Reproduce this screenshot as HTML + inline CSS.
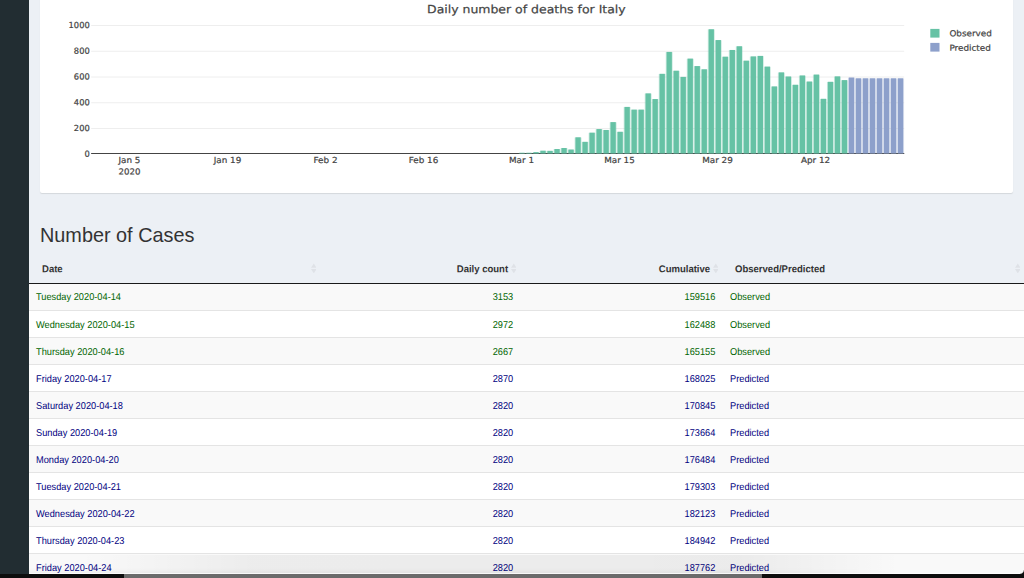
<!DOCTYPE html>
<html lang="en"><head><meta charset="utf-8"><title>Daily number of deaths for Italy</title>
<style>
html,body{margin:0;padding:0}
body{width:1024px;height:578px;overflow:hidden;background:#ecf0f5;position:relative;font-family:"Liberation Sans",sans-serif;color:#333}
.side{position:absolute;left:0;top:0;width:29px;height:578px;background:#222d32}
.card{position:absolute;left:40px;top:-10px;width:973px;height:202.5px;background:#fff;border-radius:2px;box-shadow:0 1px 1px rgba(0,0,0,.1)}
svg.chart{position:absolute;left:0;top:0}
svg.chart text{font-family:"DejaVu Sans","Liberation Sans",sans-serif;font-size:8.3px;fill:#444;stroke:#444;stroke-width:.22px}
svg.chart .title{font-size:11.4px}
h2{position:absolute;left:40.3px;top:222px;margin:0;font-weight:400;font-size:19.8px;line-height:26px;color:#333;white-space:nowrap;transform:scale(1.003,1) rotate(.02deg);transform-origin:0 50%}
table{position:absolute;left:29px;top:256px;width:995px;border-collapse:separate;border-spacing:0;font-size:10px;table-layout:fixed}
th{height:27px;padding:0 0 1px 0;box-sizing:border-box;font-weight:700;color:#333;font-size:9.3px;position:relative;white-space:nowrap}
td{height:27px;padding:0;box-sizing:border-box;border-top:1px solid #e4e4e4;white-space:nowrap;line-height:14px}
tr:first-child td{border-top:none}
tr.odd td{background:#f9f9f9}
tr.even td{background:#fff}
tr.o td{color:#006400}
tr.p td{color:#000080}
.c1{text-align:left;padding-left:7.3px;width:291px}
.c2{text-align:right;padding-right:7px;width:200px}
.c3{text-align:right;padding-right:6.5px;width:202px}
.c4{text-align:left;padding-left:7.6px}
th.c1{padding-left:12.9px}
th.c2{padding-right:12.4px}
th.c3{padding-right:12.3px}
th.c4{padding-left:12.8px}
.t{display:inline-block;transform:scale(.925,1) rotate(.03deg);transform-origin:0 50%}
.c2 .t,.c3 .t{transform-origin:100% 50%}
th .t{transform:scale(1.025,1.08) rotate(.03deg)}
td .t{position:relative;top:.6px}
.si{position:absolute;right:3.7px;top:6.6px;fill:#dfe2e7}
.hb{position:absolute;left:29px;top:283px;width:995px;height:1px;background:#1a1a1a}
.corner{position:absolute;left:1020px;top:570px;width:4px;height:4px;background:radial-gradient(circle at 0 0,rgba(13,13,13,0) 3.3px,#0d0d0d 4.4px)}
.hl{position:absolute;left:29px;top:573px;width:991px;height:1px;background:rgba(255,255,255,.75)}
.strip{position:absolute;left:0;top:574px;height:4px;width:1024px;background:#0d0d0d}
.strip i{position:absolute;left:124px;top:0;width:638px;height:4px;background:#6b6b6b}
.shade{position:absolute;left:0;top:555px;width:1024px;height:19px;background:linear-gradient(90deg,rgba(0,0,0,0) 80px,rgba(0,0,0,.05) 250px,rgba(0,0,0,.055) 740px,rgba(0,0,0,0) 900px)}
.shade2{position:absolute;left:29px;top:568px;width:995px;height:6px;background:linear-gradient(rgba(0,0,0,0),rgba(0,0,0,.04));-webkit-mask-image:linear-gradient(90deg,#000 700px,transparent 870px);mask-image:linear-gradient(90deg,#000 700px,transparent 870px)}
</style></head><body>
<div class="side"></div>
<div class="card"></div>
<svg class="chart" width="1024" height="200" viewBox="0 0 1024 200">
<text class="title" transform="translate(526.35,13.3) scale(1.094,1) rotate(.03)" text-anchor="middle">Daily number of deaths for Italy</text>
<g stroke="#eee" stroke-width="1"><line x1="91.2" x2="904.2" y1="128.54" y2="128.54"/><line x1="91.2" x2="904.2" y1="102.78" y2="102.78"/><line x1="91.2" x2="904.2" y1="77.02" y2="77.02"/><line x1="91.2" x2="904.2" y1="51.26" y2="51.26"/><line x1="91.2" x2="904.2" y1="25.50" y2="25.50"/></g>
<line x1="91.2" x2="904.2" y1="153.5" y2="153.5" stroke="#444" stroke-width="1"/>
<g fill="#66c2a5" opacity=".3"><rect x="518.50" y="152.95" width="7.01" height="1.05"/><rect x="525.50" y="152.95" width="7.01" height="1.05"/><rect x="532.51" y="152.31" width="7.01" height="1.69"/><rect x="539.52" y="150.89" width="7.01" height="3.11"/><rect x="546.53" y="151.02" width="7.01" height="2.98"/><rect x="553.54" y="149.22" width="7.01" height="4.78"/><rect x="560.55" y="148.19" width="7.01" height="5.81"/><rect x="567.57" y="149.73" width="7.01" height="4.27"/><rect x="574.58" y="137.50" width="7.01" height="16.50"/><rect x="581.59" y="142.01" width="7.01" height="11.99"/><rect x="588.60" y="132.86" width="7.01" height="21.14"/><rect x="595.61" y="129.26" width="7.01" height="24.74"/><rect x="602.62" y="130.16" width="7.01" height="23.84"/><rect x="609.62" y="122.30" width="7.01" height="31.70"/><rect x="616.63" y="131.96" width="7.01" height="22.04"/><rect x="623.64" y="107.10" width="7.01" height="46.90"/><rect x="630.65" y="109.81" width="7.01" height="44.19"/><rect x="637.66" y="109.81" width="7.01" height="44.19"/><rect x="644.67" y="93.58" width="7.01" height="60.42"/><rect x="651.69" y="99.24" width="7.01" height="54.76"/><rect x="658.70" y="74.00" width="7.01" height="80.00"/><rect x="665.71" y="52.10" width="7.01" height="101.90"/><rect x="672.72" y="70.91" width="7.01" height="83.09"/><rect x="679.73" y="77.09" width="7.01" height="76.91"/><rect x="686.74" y="58.80" width="7.01" height="95.20"/><rect x="693.75" y="66.27" width="7.01" height="87.73"/><rect x="700.75" y="69.49" width="7.01" height="84.51"/><rect x="707.76" y="29.44" width="7.01" height="124.56"/><rect x="714.77" y="40.25" width="7.01" height="113.75"/><rect x="721.78" y="56.87" width="7.01" height="97.13"/><rect x="728.79" y="50.17" width="7.01" height="103.83"/><rect x="735.80" y="46.44" width="7.01" height="107.56"/><rect x="742.81" y="60.86" width="7.01" height="93.14"/><rect x="749.82" y="56.61" width="7.01" height="97.39"/><rect x="756.84" y="56.10" width="7.01" height="97.90"/><rect x="763.85" y="66.79" width="7.01" height="87.21"/><rect x="770.86" y="86.62" width="7.01" height="67.38"/><rect x="777.87" y="72.58" width="7.01" height="81.42"/><rect x="784.88" y="76.70" width="7.01" height="77.30"/><rect x="791.88" y="84.95" width="7.01" height="69.05"/><rect x="798.89" y="75.67" width="7.01" height="78.33"/><rect x="805.90" y="81.73" width="7.01" height="72.27"/><rect x="812.92" y="74.77" width="7.01" height="79.23"/><rect x="819.93" y="98.99" width="7.01" height="55.01"/><rect x="826.94" y="81.99" width="7.01" height="72.01"/><rect x="833.95" y="76.58" width="7.01" height="77.42"/><rect x="840.96" y="80.31" width="7.01" height="73.69"/></g><g fill="#8da0cb" opacity=".3"><rect x="847.97" y="77.74" width="7.01" height="76.26"/><rect x="854.98" y="78.51" width="7.01" height="75.49"/><rect x="861.99" y="78.51" width="7.01" height="75.49"/><rect x="869.00" y="78.51" width="7.01" height="75.49"/><rect x="876.00" y="78.51" width="7.01" height="75.49"/><rect x="883.01" y="78.51" width="7.01" height="75.49"/><rect x="890.02" y="78.51" width="7.01" height="75.49"/><rect x="897.03" y="78.51" width="7.01" height="75.49"/></g>
<g fill="#66c2a5"><rect x="519.35" y="152.75" width="5.30" height="1.25"/><rect x="526.36" y="152.75" width="5.30" height="1.25"/><rect x="533.37" y="152.11" width="5.30" height="1.89"/><rect x="540.38" y="150.69" width="5.30" height="3.31"/><rect x="547.39" y="150.82" width="5.30" height="3.18"/><rect x="554.40" y="149.02" width="5.30" height="4.98"/><rect x="561.41" y="147.99" width="5.30" height="6.01"/><rect x="568.42" y="149.53" width="5.30" height="4.47"/><rect x="575.43" y="137.30" width="5.30" height="16.70"/><rect x="582.44" y="141.81" width="5.30" height="12.19"/><rect x="589.45" y="132.66" width="5.30" height="21.34"/><rect x="596.46" y="129.06" width="5.30" height="24.94"/><rect x="603.47" y="129.96" width="5.30" height="24.04"/><rect x="610.48" y="122.10" width="5.30" height="31.90"/><rect x="617.49" y="131.76" width="5.30" height="22.24"/><rect x="624.50" y="106.90" width="5.30" height="47.10"/><rect x="631.51" y="109.61" width="5.30" height="44.39"/><rect x="638.52" y="109.61" width="5.30" height="44.39"/><rect x="645.53" y="93.38" width="5.30" height="60.62"/><rect x="652.54" y="99.04" width="5.30" height="54.96"/><rect x="659.55" y="73.80" width="5.30" height="80.20"/><rect x="666.56" y="51.90" width="5.30" height="102.10"/><rect x="673.57" y="70.71" width="5.30" height="83.29"/><rect x="680.58" y="76.89" width="5.30" height="77.11"/><rect x="687.59" y="58.60" width="5.30" height="95.40"/><rect x="694.60" y="66.07" width="5.30" height="87.93"/><rect x="701.61" y="69.29" width="5.30" height="84.71"/><rect x="708.62" y="29.24" width="5.30" height="124.76"/><rect x="715.63" y="40.05" width="5.30" height="113.95"/><rect x="722.64" y="56.67" width="5.30" height="97.33"/><rect x="729.65" y="49.97" width="5.30" height="104.03"/><rect x="736.66" y="46.24" width="5.30" height="107.76"/><rect x="743.67" y="60.66" width="5.30" height="93.34"/><rect x="750.68" y="56.41" width="5.30" height="97.59"/><rect x="757.69" y="55.90" width="5.30" height="98.10"/><rect x="764.70" y="66.59" width="5.30" height="87.41"/><rect x="771.71" y="86.42" width="5.30" height="67.58"/><rect x="778.72" y="72.38" width="5.30" height="81.62"/><rect x="785.73" y="76.50" width="5.30" height="77.50"/><rect x="792.74" y="84.75" width="5.30" height="69.25"/><rect x="799.75" y="75.47" width="5.30" height="78.53"/><rect x="806.76" y="81.53" width="5.30" height="72.47"/><rect x="813.77" y="74.57" width="5.30" height="79.43"/><rect x="820.78" y="98.79" width="5.30" height="55.21"/><rect x="827.79" y="81.79" width="5.30" height="72.21"/><rect x="834.80" y="76.38" width="5.30" height="77.62"/><rect x="841.81" y="80.11" width="5.30" height="73.89"/></g>
<g fill="#8da0cb"><rect x="848.82" y="77.54" width="5.30" height="76.46"/><rect x="855.83" y="78.31" width="5.30" height="75.69"/><rect x="862.84" y="78.31" width="5.30" height="75.69"/><rect x="869.85" y="78.31" width="5.30" height="75.69"/><rect x="876.86" y="78.31" width="5.30" height="75.69"/><rect x="883.87" y="78.31" width="5.30" height="75.69"/><rect x="890.88" y="78.31" width="5.30" height="75.69"/><rect x="897.89" y="78.31" width="5.30" height="75.69"/></g>
<line x1="91.2" x2="904.2" y1="153.5" y2="153.5" stroke="#444" stroke-width="1" opacity=".45"/>
<g><text transform="translate(89.7,156.70) rotate(.03)" text-anchor="end">0</text><text transform="translate(89.7,130.94) rotate(.03)" text-anchor="end">200</text><text transform="translate(89.7,105.18) rotate(.03)" text-anchor="end">400</text><text transform="translate(89.7,79.42) rotate(.03)" text-anchor="end">600</text><text transform="translate(89.7,53.66) rotate(.03)" text-anchor="end">800</text><text transform="translate(89.7,27.90) rotate(.03)" text-anchor="end">1000</text></g>
<g><text transform="translate(129.5,163.0) scale(1.06,1) rotate(.03)" text-anchor="middle">Jan 5</text><text transform="translate(227.5,163.0) scale(1.06,1) rotate(.03)" text-anchor="middle">Jan 19</text><text transform="translate(325.5,163.0) scale(1.06,1) rotate(.03)" text-anchor="middle">Feb 2</text><text transform="translate(423.5,163.0) scale(1.06,1) rotate(.03)" text-anchor="middle">Feb 16</text><text transform="translate(521.5,163.0) scale(1.06,1) rotate(.03)" text-anchor="middle">Mar 1</text><text transform="translate(619.5,163.0) scale(1.06,1) rotate(.03)" text-anchor="middle">Mar 15</text><text transform="translate(717.5,163.0) scale(1.06,1) rotate(.03)" text-anchor="middle">Mar 29</text><text transform="translate(815.5,163.0) scale(1.06,1) rotate(.03)" text-anchor="middle">Apr 12</text><text transform="translate(129.5,174.6) scale(1.04,1) rotate(.03)" text-anchor="middle">2020</text></g>
<rect x="930.3" y="28.9" width="9.2" height="8.7" fill="#66c2a5"/>
<rect x="930.3" y="42.9" width="9.2" height="8.7" fill="#8da0cb"/>
<text transform="translate(949.4,36.2) scale(1.065,1) rotate(.03)">Observed</text>
<text transform="translate(949.4,50.7) scale(1.065,1) rotate(.03)">Predicted</text>
</svg>
<h2>Number of Cases</h2>
<table>
<thead><tr><th class="c1"><span class="t">Date</span><svg class="si" width="5.6" height="10.8" viewBox="0 0 5 10" preserveAspectRatio="none"><path d="M0 4.5 L2.5 0.4 L5 4.5 Z M0 5.5 L2.5 9.6 L5 5.5 Z"/></svg></th><th class="c2"><span class="t">Daily count</span><svg class="si" width="5.6" height="10.8" viewBox="0 0 5 10" preserveAspectRatio="none"><path d="M0 4.5 L2.5 0.4 L5 4.5 Z M0 5.5 L2.5 9.6 L5 5.5 Z"/></svg></th><th class="c3"><span class="t">Cumulative</span><svg class="si" width="5.6" height="10.8" viewBox="0 0 5 10" preserveAspectRatio="none"><path d="M0 4.5 L2.5 0.4 L5 4.5 Z M0 5.5 L2.5 9.6 L5 5.5 Z"/></svg></th><th class="c4"><span class="t">Observed/Predicted</span><svg class="si" width="5.6" height="10.8" viewBox="0 0 5 10" preserveAspectRatio="none"><path d="M0 4.5 L2.5 0.4 L5 4.5 Z M0 5.5 L2.5 9.6 L5 5.5 Z"/></svg></th></tr></thead>
<tbody>
<tr class="o odd"><td class="c1"><span class="t">Tuesday 2020-04-14</span></td><td class="c2"><span class="t">3153</span></td><td class="c3"><span class="t">159516</span></td><td class="c4"><span class="t">Observed</span></td></tr>
<tr class="o even"><td class="c1"><span class="t">Wednesday 2020-04-15</span></td><td class="c2"><span class="t">2972</span></td><td class="c3"><span class="t">162488</span></td><td class="c4"><span class="t">Observed</span></td></tr>
<tr class="o odd"><td class="c1"><span class="t">Thursday 2020-04-16</span></td><td class="c2"><span class="t">2667</span></td><td class="c3"><span class="t">165155</span></td><td class="c4"><span class="t">Observed</span></td></tr>
<tr class="p even"><td class="c1"><span class="t">Friday 2020-04-17</span></td><td class="c2"><span class="t">2870</span></td><td class="c3"><span class="t">168025</span></td><td class="c4"><span class="t">Predicted</span></td></tr>
<tr class="p odd"><td class="c1"><span class="t">Saturday 2020-04-18</span></td><td class="c2"><span class="t">2820</span></td><td class="c3"><span class="t">170845</span></td><td class="c4"><span class="t">Predicted</span></td></tr>
<tr class="p even"><td class="c1"><span class="t">Sunday 2020-04-19</span></td><td class="c2"><span class="t">2820</span></td><td class="c3"><span class="t">173664</span></td><td class="c4"><span class="t">Predicted</span></td></tr>
<tr class="p odd"><td class="c1"><span class="t">Monday 2020-04-20</span></td><td class="c2"><span class="t">2820</span></td><td class="c3"><span class="t">176484</span></td><td class="c4"><span class="t">Predicted</span></td></tr>
<tr class="p even"><td class="c1"><span class="t">Tuesday 2020-04-21</span></td><td class="c2"><span class="t">2820</span></td><td class="c3"><span class="t">179303</span></td><td class="c4"><span class="t">Predicted</span></td></tr>
<tr class="p odd"><td class="c1"><span class="t">Wednesday 2020-04-22</span></td><td class="c2"><span class="t">2820</span></td><td class="c3"><span class="t">182123</span></td><td class="c4"><span class="t">Predicted</span></td></tr>
<tr class="p even"><td class="c1"><span class="t">Thursday 2020-04-23</span></td><td class="c2"><span class="t">2820</span></td><td class="c3"><span class="t">184942</span></td><td class="c4"><span class="t">Predicted</span></td></tr>
<tr class="p odd"><td class="c1"><span class="t">Friday 2020-04-24</span></td><td class="c2"><span class="t">2820</span></td><td class="c3"><span class="t">187762</span></td><td class="c4"><span class="t">Predicted</span></td></tr>
</tbody></table>
<div class="hb"></div>
<div class="shade"></div><div class="shade2"></div>
<div class="hl"></div><div class="corner"></div>
<div class="strip"><i></i></div>
</body></html>
